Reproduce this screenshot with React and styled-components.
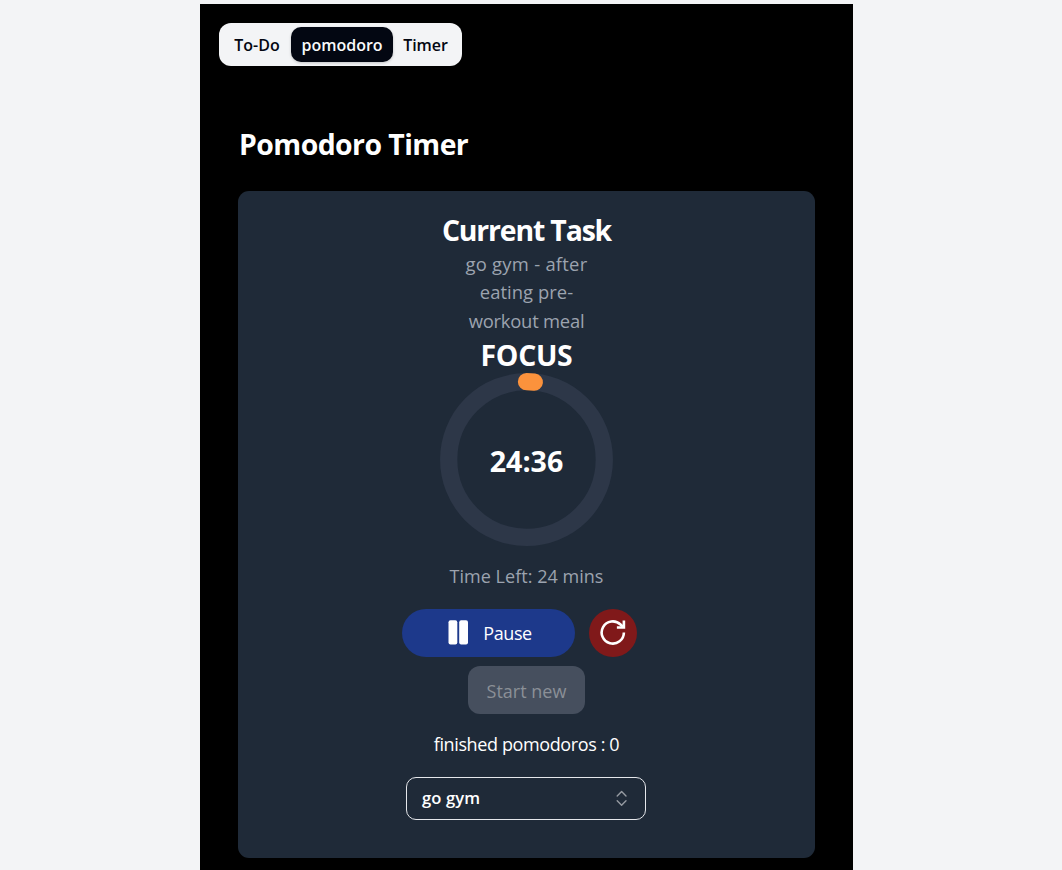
import React from "react";
import styled, { createGlobalStyle } from "styled-components";

const GlobalStyle = createGlobalStyle`
  * { box-sizing: border-box; }
  html, body, #root { height: 100%; }
  body {
    margin: 0;
    overflow: hidden;
    background: #f3f4f6;
    color: #fff;
    font-family: "Open Sans", "Noto Sans", sans-serif;
  }
  button { font: inherit; border: 0; padding: 0; margin: 0; white-space: nowrap; }
`;

const Page = styled.div`
  height: 100%;
  padding: 4px 0 0 200px;
`;

const Column = styled.main`
  width: 653px;
  height: 100%;
  padding: 19px 38px 0;
  background: #000;
`;

const Tabs = styled.nav`
  display: flex;
  align-items: center;
  width: 243px;
  height: 43px;
  margin-left: -19px;
  padding: 4px;
  border-radius: 12px;
  background: #f3f4f6;
`;

const Tab = styled.button`
  width: ${(p) => p.$width}px;
  height: 35px;
  border-radius: 10px;
  background: ${(p) => (p.$active ? "#030712" : "transparent")};
  color: ${(p) => (p.$active ? "#f9fafb" : "#030712")};
  font-size: 16px;
  font-weight: 600;
  line-height: 24px;
  letter-spacing: ${(p) => p.$spacing || 0}px;
  box-shadow: ${(p) => (p.$active ? "0 1px 3px rgba(0, 0, 0, 0.2)" : "none")};
`;

const Title = styled.h1`
  margin: 59px 0 0 1px;
  font-size: 28.4px;
  font-weight: 700;
  line-height: 38px;
  letter-spacing: -0.55px;
`;

const Card = styled.section`
  display: flex;
  flex-direction: column;
  align-items: center;
  width: 577px;
  height: 667px;
  margin-top: 28px;
  padding-top: 20px;
  border-radius: 11px;
  background: #1f2a38;
`;

const Heading = styled.h2`
  margin: 0;
  font-size: 28.4px;
  font-weight: 700;
  line-height: ${(p) => p.$line}px;
  letter-spacing: ${(p) => p.$spacing}px;
`;

const Task = styled.p`
  width: 154px;
  margin: 0;
  color: #9ca3af;
  font-size: 18.4px;
  line-height: 28.4px;
  text-align: center;
`;

const TaskLine = styled.span`
  display: block;
  letter-spacing: ${(p) => p.$spacing}px;
`;

const Dial = styled.div`
  display: grid;
  place-items: center;
  width: 173px;
  height: 173px;
  margin-top: -3.4px;
  > * { grid-area: 1 / 1; }
`;

const Time = styled.span`
  padding-top: 4px;
  font-size: 28.6px;
  font-weight: 700;
  line-height: 38px;
`;

const Remaining = styled.p`
  margin: 16px 0 0;
  color: #9ca3af;
  font-size: 18px;
  line-height: 29px;
  letter-spacing: 0.03px;
`;

const Controls = styled.div`
  display: flex;
  gap: 14px;
  margin: 18px 14px 0 0;
`;

const PauseButton = styled.button`
  display: flex;
  align-items: center;
  justify-content: center;
  gap: 15px;
  width: 173px;
  height: 48px;
  padding-left: 3px;
  border-radius: 24px;
  background: #1d398b;
  color: #fff;
  font-size: 18px;
  letter-spacing: -0.4px;
`;

const ResetButton = styled.button`
  display: grid;
  place-items: center;
  width: 48px;
  height: 48px;
  border-radius: 50%;
  background: #80191a;
  color: #fff;
`;

const StartButton = styled.button`
  width: 117px;
  height: 48px;
  margin-top: 9px;
  border-radius: 12px;
  background: #464f5e;
  color: #8b9097;
  font-size: 18px;
  padding-top: 2px;
`;

const Finished = styled.p`
  margin: 16px 0 0;
  font-size: 18px;
  line-height: 29px;
  letter-spacing: -0.38px;
`;

const Select = styled.button`
  display: flex;
  align-items: center;
  justify-content: space-between;
  width: 240px;
  height: 43px;
  margin: 18px 1px 0 0;
  padding: 0 14px 1px 15px;
  border: 1px solid #e5e7eb;
  border-radius: 10px;
  background: transparent;
  color: #fff;
  font-size: 16.6px;
  font-weight: 600;
  letter-spacing: 0.1px;
`;

const ProgressRing = () => (
  <svg width="173" height="173" viewBox="0 0 173 173" fill="none" strokeWidth="17.3">
    <circle cx="86.5" cy="86.5" r="77.8" stroke="#2d3748" />
    <path d="M86.5 8.7A77.8 77.8 0 0 1 94.3 9.1" stroke="#fb923c" strokeLinecap="round" />
  </svg>
);

const PauseIcon = () => (
  <svg width="20" height="25" viewBox="0 0 20 25" fill="currentColor">
    <rect x="0.5" y="0.3" width="8.8" height="24.2" rx="2" />
    <rect x="11.2" y="0.3" width="8.8" height="24.2" rx="2" />
  </svg>
);

const ResetIcon = () => (
  <svg
    width="29"
    height="29"
    viewBox="0 0 24 24"
    fill="none"
    stroke="currentColor"
    strokeWidth="2.15"
  >
    <path d="M20.6 12A9.2 9.2 0 1 1 17.8 5.4L20.2 7.7" />
    <path d="M14.8 7.9H20.6V2.1" />
  </svg>
);

const SelectIcon = () => (
  <svg
    width="18"
    height="18"
    viewBox="0 0 18 18"
    fill="none"
    stroke="#969ba2"
    strokeWidth="1.4"
    strokeLinecap="round"
    strokeLinejoin="round"
  >
    <path d="M4.2 7 8.6 2.6 13 7M4.2 11.8l4.4 4.4 4.4-4.4" />
  </svg>
);

export default function App() {
  return (
    <>
      <GlobalStyle />
      <Page>
        <Column>
          <Tabs>
            <Tab $width={68}>To-Do</Tab>
            <Tab $width={102} $active>pomodoro</Tab>
            <Tab $width={65} $spacing={-0.1}>Timer</Tab>
          </Tabs>
          <Title>Pomodoro Timer</Title>
          <Card>
            <Heading $spacing={-1.15} $line={39}>Current Task</Heading>
            <Task>
              <TaskLine $spacing={0.26}>go gym - after</TaskLine>
              <TaskLine $spacing={0.05}>eating pre-</TaskLine>
              <TaskLine $spacing={-0.22}>workout meal</TaskLine>
            </Task>
            <Heading $spacing={-0.3} $line={41}>FOCUS</Heading>
            <Dial>
              <ProgressRing />
              <Time>24:36</Time>
            </Dial>
            <Remaining>Time Left: 24 mins</Remaining>
            <Controls>
              <PauseButton><PauseIcon />Pause</PauseButton>
              <ResetButton aria-label="Reset"><ResetIcon /></ResetButton>
            </Controls>
            <StartButton disabled>Start new</StartButton>
            <Finished>finished pomodoros : 0</Finished>
            <Select>go gym<SelectIcon /></Select>
          </Card>
        </Column>
      </Page>
    </>
  );
}
